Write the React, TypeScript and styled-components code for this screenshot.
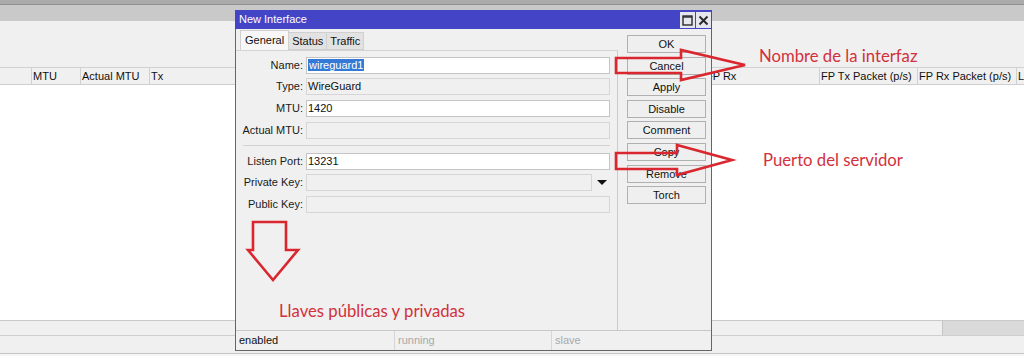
import React from "react";
import styled, { createGlobalStyle } from "styled-components";

const Global = createGlobalStyle`
  html, body { margin: 0; padding: 0; }
  body {
    width: 1024px; height: 356px; overflow: hidden;
    background: #ffffff;
    font-family: "Liberation Sans", Arial, sans-serif;
    font-size: 11px; color: #111;
  }
`;

const Page = styled.div`
  position: relative;
  width: 1024px;
  height: 356px;
  display: flex;
  flex-direction: column;
  background: #ffffff;
`;

const TopStrip = styled.div`
  height: 4px;
  background: #ababab;
  border-bottom: 1px solid #8f8f8f;
`;

const GreyBar = styled.div`
  height: 16px;
  background: #c9c9c9;
`;

const Toolbar = styled.div`
  height: 46px;
  background: #f0f0f0;
`;

const HeaderRow = styled.div`
  height: 16px;
  display: flex;
  background: #f0f0f0;
  border-top: 1px solid #d2d2d2;
  border-bottom: 1px solid #cfcfcf;
  overflow: hidden;
`;

const HeaderCell = styled.div<{ $w: number; $first?: boolean }>`
  flex: 0 0 ${(p) => p.$w}px;
  box-sizing: border-box;
  border-left: ${(p) => (p.$first ? "none" : "1px solid #d0d0d0")};
  padding-left: 1px;
  line-height: 16px;
  white-space: nowrap;
  overflow: hidden;
  color: #111;
`;

const ListBody = styled.div`
  flex: 1;
  background: #ffffff;
`;

const ScrollRow = styled.div`
  height: 14px;
  display: flex;
  justify-content: flex-end;
  background: #f0f0f0;
  border-top: 1px solid #c9c9c9;
  border-bottom: 1px solid #cfcfcf;
`;

const ScrollThumb = styled.div`
  width: 81px;
  background: #dadada;
  border-left: 1px solid #c4c4c4;
`;

const StatusRow = styled.div`
  height: 17px;
  background: #f0f0f0;
  border-bottom: 1px solid #c4c4c4;
`;

const BottomGap = styled.div`
  height: 2px;
  background: #f7f7f7;
`;

/* ---------- dialog window ---------- */

const Window = styled.div`
  position: absolute;
  left: 235px;
  top: 10px;
  width: 477px;
  height: 341px;
  box-sizing: border-box;
  display: flex;
  flex-direction: column;
  background: #f0f0f0;
  border: 1px solid #656565;
  border-top: none;
`;

const TitleBar = styled.div`
  height: 19px;
  margin: 0 -1px;
  display: flex;
  align-items: center;
  background: #4444c6;
  padding: 0 1px 0 4px;
`;

const Title = styled.div`
  flex: 1;
  color: #ffffff;
  font-size: 11px;
  line-height: 19px;
`;

const TitleButtons = styled.div`
  display: flex;
  gap: 1px;
  align-self: flex-end;
  margin-bottom: 1px;
`;

const TitleButton = styled.div`
  width: 15px;
  height: 16px;
  display: flex;
  align-items: center;
  justify-content: center;
  background: #e6e6ee;
`;

const WindowBody = styled.div`
  flex: 1;
  display: flex;
`;

const TabsArea = styled.div`
  width: 382px;
  display: flex;
  flex-direction: column;
  padding-top: 1px;
  box-sizing: border-box;
`;

const TabRow = styled.div`
  height: 20px;
  display: flex;
  align-items: flex-end;
  padding-left: 4px;
`;

const Tab = styled.div<{ $active?: boolean }>`
  height: ${(p) => (p.$active ? 20 : 18)}px;
  box-sizing: border-box;
  padding: 0 ${(p) => (p.$active ? 4 : 3)}px;
  line-height: ${(p) => (p.$active ? 18 : 16)}px;
  background: ${(p) => (p.$active ? "#f7f7f7" : "#e2e2e2")};
  border: 1px solid #d0d0d0;
  border-bottom: ${(p) => (p.$active ? "none" : "1px solid #d0d0d0")};
  margin-left: ${(p) => (p.$active ? 0 : -1)}px;
  font-size: 11px;
  color: #111;
`;

const Panel = styled.div`
  flex: 1;
  background: #f0f0f0;
  border-top: 1px solid #d3d3d3;
  border-right: 1px solid #cbcbcb;
  padding: 5.7px 7px 0 0;
`;

const Form = styled.div`
  display: grid;
  grid-template-columns: 67px 1fr;
  column-gap: 3px;
  row-gap: 4.7px;
`;

const Label = styled.div`
  text-align: right;
  line-height: 17px;
  font-size: 11px;
  color: #1a1a1a;
  white-space: nowrap;
`;

const Field = styled.div<{ $editable?: boolean }>`
  height: 17px;
  box-sizing: border-box;
  background: ${(p) => (p.$editable ? "#ffffff" : "#f0f0f0")};
  border: 1px solid ${(p) => (p.$editable ? "#c4c4c4" : "#d6d6d6")};
  padding-left: 1px;
  line-height: 15px;
  font-size: 11px;
  color: #111;
  white-space: nowrap;
  overflow: hidden;
`;

const Selected = styled.span`
  background: #3479d6;
  color: #ffffff;
  padding: 0 1px;
`;

const FieldWithDrop = styled.div`
  display: flex;
  align-items: center;
`;

const GrowField = styled(Field)`
  flex: 1;
`;

const DropButton = styled.div`
  width: 18px;
  height: 17px;
  display: flex;
  align-items: center;
  justify-content: center;
`;

const DropTriangle = styled.div`
  width: 0;
  height: 0;
  border-left: 5px solid transparent;
  border-right: 5px solid transparent;
  border-top: 5px solid #111;
  margin-left: 2px;
`;

const Separator = styled.div`
  grid-column: 1 / -1;
  height: 1px;
  background: #d2d2d2;
  margin: 1.6px 0 2px 7px;
`;

const ButtonColumn = styled.div`
  flex: 1;
  display: flex;
  flex-direction: column;
  gap: 3.6px;
  padding: 6px 0 0 9px;
`;

const Button = styled.div`
  width: 79px;
  height: 18px;
  box-sizing: border-box;
  border: 1px solid #b0b0b0;
  background: #efefef;
  text-align: center;
  line-height: 16px;
  font-size: 11px;
  color: #111;
`;

const StatusBar = styled.div`
  height: 20px;
  display: flex;
  box-sizing: border-box;
  border-top: 1px solid #c8c8c8;
`;

const StatusCell = styled.div<{ $w?: number; $dim?: boolean; $first?: boolean }>`
  ${(p) => (p.$w ? `flex: 0 0 ${p.$w}px;` : "flex: 1;")}
  box-sizing: border-box;
  border-left: ${(p) => (p.$first ? "none" : "1px solid #d6d6d6")};
  padding-left: 3px;
  line-height: 19px;
  font-size: 11px;
  color: ${(p) => (p.$dim ? "#a9a9a9" : "#111")};
`;

/* ---------- annotations ---------- */

const ArrowLayer = styled.svg`
  position: absolute;
  left: 0;
  top: 0;
  pointer-events: none;
`;

const Note = styled.div<{ $x: number; $y: number }>`
  position: absolute;
  left: ${(p) => p.$x}px;
  top: ${(p) => p.$y}px;
  font-family: Lato, "Open Sans", sans-serif;
  font-size: 16.7px;
  line-height: 20px;
  color: #d2313c;
  white-space: nowrap;
`;

const columns: { w: number; t: string }[] = [
  { w: 31, t: "" },
  { w: 49, t: "MTU" },
  { w: 69, t: "Actual MTU" },
  { w: 101, t: "Tx" },
  { w: 100, t: "Rx" },
  { w: 100, t: "Tx Packet (p/s)" },
  { w: 100, t: "Rx Packet (p/s)" },
  { w: 154, t: "FP Tx" },
  { w: 115, t: "FP Rx" },
  { w: 98, t: "FP Tx Packet (p/s)" },
  { w: 99, t: "FP Rx Packet (p/s)" },
  { w: 8, t: "L" },
];

const buttons = ["OK", "Cancel", "Apply", "Disable", "Comment", "Copy", "Remove", "Torch"];

export default function App() {
  return (
    <>
      <Global />
      <Page>
        <TopStrip />
        <GreyBar />
        <Toolbar />
        <HeaderRow>
          {columns.map((c, i) => (
            <HeaderCell key={i} $w={c.w} $first={i === 0}>
              {c.t}
            </HeaderCell>
          ))}
        </HeaderRow>
        <ListBody />
        <ScrollRow>
          <ScrollThumb />
        </ScrollRow>
        <StatusRow />
        <BottomGap />

        <Window>
          <TitleBar>
            <Title>New Interface</Title>
            <TitleButtons>
              <TitleButton>
                <svg width="11" height="11" viewBox="0 0 11 11">
                  <rect x="1" y="1" width="9" height="9" fill="none" stroke="#2a2a2a" strokeWidth="1.4" />
                  <line x1="1" y1="2" x2="10" y2="2" stroke="#2a2a2a" strokeWidth="1.4" />
                </svg>
              </TitleButton>
              <TitleButton>
                <svg width="11" height="11" viewBox="0 0 11 11">
                  <path d="M1.5 1.5 L9.5 9.5 M9.5 1.5 L1.5 9.5" stroke="#2a2a2a" strokeWidth="2" />
                </svg>
              </TitleButton>
            </TitleButtons>
          </TitleBar>
          <WindowBody>
            <TabsArea>
              <TabRow>
                <Tab $active>General</Tab>
                <Tab>Status</Tab>
                <Tab>Traffic</Tab>
              </TabRow>
              <Panel>
                <Form>
                  <Label>Name:</Label>
                  <Field $editable>
                    <Selected>wireguard1</Selected>
                  </Field>
                  <Label>Type:</Label>
                  <Field>WireGuard</Field>
                  <Label>MTU:</Label>
                  <Field $editable>1420</Field>
                  <Label>Actual MTU:</Label>
                  <Field />
                  <Separator />
                  <Label>Listen Port:</Label>
                  <Field $editable>13231</Field>
                  <Label>Private Key:</Label>
                  <FieldWithDrop>
                    <GrowField />
                    <DropButton>
                      <DropTriangle />
                    </DropButton>
                  </FieldWithDrop>
                  <Label>Public Key:</Label>
                  <Field />
                </Form>
              </Panel>
            </TabsArea>
            <ButtonColumn>
              {buttons.map((b) => (
                <Button key={b}>{b}</Button>
              ))}
            </ButtonColumn>
          </WindowBody>
          <StatusBar>
            <StatusCell $w={158} $first>
              enabled
            </StatusCell>
            <StatusCell $w={157} $dim>
              running
            </StatusCell>
            <StatusCell $dim>slave</StatusCell>
          </StatusBar>
        </Window>

        <ArrowLayer width="1024" height="356" viewBox="0 0 1024 356">
          <g fill="none" stroke="#d9262f" strokeWidth="2.6" strokeLinejoin="miter">
            <path d="M616 58 L681 58 L681 50 L745 65 L681 80 L681 73 L616 73 Z" />
            <path d="M616 153 L677 153 L677 145 L732 160 L677 175 L677 169 L616 169 Z" />
            <path d="M253 222 L286 222 L286 250 L298 250 L273 280 L248 250 L253 250 Z" />
          </g>
        </ArrowLayer>
        <Note $x={759} $y={46}>Nombre de la interfaz</Note>
        <Note $x={763} $y={150}>Puerto del servidor</Note>
        <Note $x={279} $y={301}>Llaves públicas y privadas</Note>
      </Page>
    </>
  );
}
